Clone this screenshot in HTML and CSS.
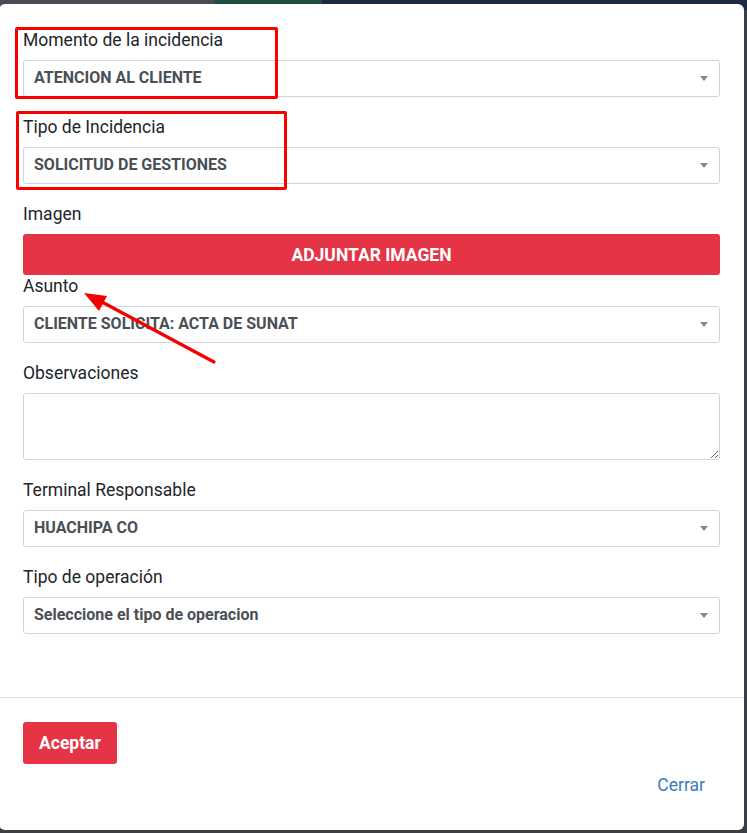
FILE: index.html
```html
<!DOCTYPE html>
<html>
  <head>
    <title>Registrar Incidencia</title>
    <link rel="stylesheet" href="styles.css">
  </head>
  <body>
    <div class="backdrop-bar">
      <span class="bar-gray"></span>
      <span class="bar-green"></span>
    </div>

    <div class="modal">
      <div class="modal-body">
        <div class="form-group">
          <label>Momento de la incidencia</label>
          <div class="select-box"><span>ATENCION AL CLIENTE</span><b class="caret"></b></div>
        </div>

        <div class="form-group">
          <label>Tipo de Incidencia</label>
          <div class="select-box"><span>SOLICITUD DE GESTIONES</span><b class="caret"></b></div>
        </div>

        <div class="form-group image-group">
          <label>Imagen</label>
          <button class="btn-attach">ADJUNTAR IMAGEN</button>
        </div>

        <div class="form-group">
          <label>Asunto</label>
          <div class="select-box"><span>CLIENTE SOLICITA: ACTA DE SUNAT</span><b class="caret"></b></div>
        </div>

        <div class="form-group">
          <label>Observaciones</label>
          <textarea class="notes"></textarea>
        </div>

        <div class="form-group">
          <label>Terminal Responsable</label>
          <div class="select-box"><span>HUACHIPA CO</span><b class="caret"></b></div>
        </div>

        <div class="form-group">
          <label>Tipo de operación</label>
          <div class="select-box"><span>Seleccione el tipo de operacion</span><b class="caret"></b></div>
        </div>
      </div>

      <div class="modal-footer">
        <button class="btn-accept">Aceptar</button>
        <a class="btn-close" href="#">Cerrar</a>
      </div>

      <!-- red annotations drawn over the form -->
      <div class="mark mark-one"></div>
      <div class="mark mark-two"></div>
      <svg class="mark-arrow" width="160" height="90" viewBox="0 0 160 90">
        <line x1="145" y1="82" x2="33" y2="22" stroke="#f50000" stroke-width="3.2" stroke-linecap="round" />
        <polygon points="15,13 38,16 30,31" fill="#f50000" />
      </svg>
    </div>
  </body>
</html>
```

FILE: styles.css
```css
body {
  margin: 0;
  height: 833px;
  overflow: hidden;
  background: #3a3e45;
  font-family: Roboto, "Liberation Sans", sans-serif;
  position: relative;
}
.backdrop-bar {
  position: absolute;
  top: 0;
  left: 0;
  right: 0;
  height: 10px;
  background: #1f2844;
  display: flex;
}
.bar-gray {
  width: 215px;
  background: #474b52;
}
.bar-green {
  width: 107px;
  background: #1f4d44;
}
.modal {
  position: relative;
  margin: 4px 0 0 -1px;
  width: 745px;
  height: 826px;
  background: #fff;
  border-radius: 6px;
  display: flex;
  flex-direction: column;
}
.modal-body {
  padding: 24px 24px 45px 24px;
  border-bottom: 1px solid #e2e4e6;
}
.form-group {
  margin-bottom: 18px;
}
.form-group label {
  display: block;
  font-size: 17.5px;
  line-height: 24px;
  color: #212529;
  margin-bottom: 8px;
}
.select-box {
  height: 37px;
  box-sizing: border-box;
  border: 1px solid #ccd5de;
  border-radius: 3px;
  display: flex;
  align-items: center;
  justify-content: space-between;
  padding: 0 11px 3px 10px;
  font-size: 16px;
  font-weight: bold;
  color: #4a4f55;
}
.caret {
  width: 0;
  height: 0;
  margin-top: 3px;
  border-left: 4px solid transparent;
  border-right: 4px solid transparent;
  border-top: 5px solid #888;
}
.image-group {
  margin-bottom: -1px;
}
.btn-attach {
  display: block;
  width: 100%;
  height: 41px;
  border: none;
  border-radius: 3px;
  background: #e43446;
  color: #fff;
  font-family: Roboto, "Liberation Sans", sans-serif;
  font-size: 17.5px;
  font-weight: bold;
}
.notes {
  display: block;
  width: 100%;
  height: 67px;
  box-sizing: border-box;
  border: 1px solid #ccd5de;
  border-radius: 3px;
  resize: vertical;
}
.modal-footer {
  padding: 24px 24px 0 24px;
  display: flex;
  flex-direction: column;
  align-items: flex-start;
}
.btn-accept {
  height: 42px;
  padding: 0 16px;
  border: none;
  border-radius: 3px;
  background: #e43446;
  color: #fff;
  font-family: Roboto, "Liberation Sans", sans-serif;
  font-size: 17.5px;
  font-weight: bold;
}
.btn-close {
  align-self: flex-end;
  margin: 9px 15px 0 0;
  font-size: 17.5px;
  line-height: 24px;
  color: #3b79c2;
  text-decoration: none;
}
.mark {
  position: absolute;
  border: 3px solid #fb0000;
  border-radius: 2px;
}
.mark-one {
  left: 16px;
  top: 23px;
  width: 257px;
  height: 66px;
}
.mark-two {
  left: 17px;
  top: 107px;
  width: 265px;
  height: 73px;
}
.mark-arrow {
  position: absolute;
  left: 70px;
  top: 276px;
}
```
